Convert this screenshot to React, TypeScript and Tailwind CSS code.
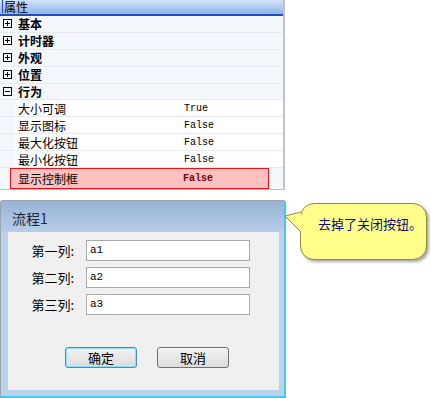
const cjk = { fontFamily: '"Noto Sans CJK SC", "Liberation Sans", sans-serif' }
const mono = { fontFamily: '"Liberation Mono", "Courier New", monospace' }

function PlusBox({ open }: { open?: boolean }) {
  return (
    <svg width="9" height="9" viewBox="0 0 9 9" className="shrink-0">
      <rect x="0.5" y="0.5" width="8" height="8" fill="#fff" stroke="#000" />
      <line x1="2" y1="4.5" x2="7" y2="4.5" stroke="#000" />
      {!open && <line x1="4.5" y1="2" x2="4.5" y2="7" stroke="#000" />}
    </svg>
  )
}

function Category({ name, open }: { name: string; open?: boolean }) {
  return (
    <div className="h-[17px] flex items-center pl-[3px] gap-[6px] border-b border-[#e7ebf1]">
      <PlusBox open={open} />
      <span className="text-[12px] font-bold leading-[15px] text-black" style={cjk}>
        {name}
      </span>
    </div>
  )
}

function Prop({ name, value }: { name: string; value: string }) {
  return (
    <div className="h-[17px] flex items-center border-b border-[#e7ebf1]">
      <div className="w-[15px] h-full shrink-0" />
      <div className="w-[168px] h-full flex items-center pl-[3px] bg-white text-[12px] leading-[15px] text-black" style={cjk}>
        {name}
      </div>
      <div className="flex-1 h-full flex items-center pl-[1px] bg-white text-[10px] leading-[15px] text-black" style={mono}>
        {value}
      </div>
    </div>
  )
}

function Field({ label, value }: { label: string; value: string }) {
  return (
    <div className="flex items-center h-[21px]">
      <div className="w-[67px] text-right pr-[1px] text-[13px] leading-[18px] text-black" style={cjk}>
        {label}
      </div>
      <div className="ml-[11px] w-[164px] h-[21px] border border-[#a9a9a9] bg-white flex items-center pl-[3px] text-[11px] text-black" style={mono}>
        {value}
      </div>
    </div>
  )
}

export default function App() {
  return (
    <div className="relative w-[431px] h-[398px] bg-white overflow-hidden">
      {/* 属性网格 */}
      <div className="w-[285px] h-[190px] bg-[#f4f7fc] border-r-2 border-b border-[#c2c2c2] flex flex-col">
        <div className="h-[16px] bg-gradient-to-b from-[#d3e3f8] to-[#8fb3e8] border-b-2 border-[#1f4fb8] flex items-center">
          <div className="w-[1px] h-[13px] bg-[#1f4fb8] ml-[2px]" />
          <span className="ml-[1px] text-[12px] leading-[12px] text-black" style={cjk}>属性</span>
        </div>
        <Category name="基本" />
        <Category name="计时器" />
        <Category name="外观" />
        <Category name="位置" />
        <Category name="行为" open />
        <Prop name="大小可调" value="True" />
        <Prop name="显示图标" value="False" />
        <Prop name="最大化按钮" value="False" />
        <Prop name="最小化按钮" value="False" />
        <div className="h-[21px] flex items-center">
          <div className="ml-[10px] w-[259px] h-[21px] border border-[#e8141c] bg-[#ffc0c0] flex items-center">
            <div className="w-[172px] pl-[7px] text-[12px] leading-[15px] text-black" style={cjk}>显示控制框</div>
            <div className="text-[10px] font-bold leading-[15px] text-[#7a0000]" style={mono}>False</div>
          </div>
        </div>
      </div>

      {/* 流程1 窗口 */}
      <div className="mt-[10px] w-[286px] h-[198px] flex flex-col border-t border-l border-[#9aa5b3] border-r-2 border-b-2 border-r-[#45c8f0] border-b-[#45c8f0] rounded-tl-[3px] rounded-tr-[3px]">
        <div className="h-[31px] bg-gradient-to-b from-[#98b3d5] to-[#b7cee8] flex items-center pl-[11px] pt-[2px]">
          <span className="text-[14px] leading-[16px] text-[#15283f]" style={cjk}>流程1</span>
        </div>
        <div className="flex-1 bg-[#b9d1ea] pl-[7px] pr-[5px] pb-[6px] flex">
          <div className="flex-1 bg-[#f0f0f0] pt-[8px] flex flex-col">
            <div className="flex flex-col gap-[6px]">
              <Field label="第一列:" value="a1" />
              <Field label="第二列:" value="a2" />
              <Field label="第三列:" value="a3" />
            </div>
            <div className="mt-[32px] flex pl-[57px] gap-[20px]">
              <button className="w-[72px] h-[21px] rounded-[3px] border border-[#3c8fc8] shadow-[inset_0_0_0_1px_#8ee0ff] bg-gradient-to-b from-[#f3f3f3] to-[#dcdcdc] text-[13px] leading-[16px] text-black" style={cjk}>
                确定
              </button>
              <button className="w-[72px] h-[21px] rounded-[3px] border border-[#707070] bg-gradient-to-b from-[#f3f3f3] to-[#dcdcdc] text-[13px] leading-[16px] text-black" style={cjk}>
                取消
              </button>
            </div>
          </div>
        </div>
      </div>

      {/* 提示气泡 */}
      <div className="absolute left-[300px] top-[203px] w-[127px] h-[57px] rounded-[14px] bg-[#ffff8a] border border-[#8f8f3a] shadow-[2px_2px_3px_rgba(0,0,0,0.35)] flex items-center pl-[17px] pb-[16px]">
        <span className="text-[13px] leading-[16px] text-[#0a0a78]" style={cjk}>去掉了关闭按钮。</span>
      </div>
      <svg className="absolute left-[284px] top-[208px]" width="20" height="30" viewBox="0 0 20 30">
        <polygon points="1,8 17,4 17,24" fill="#ffff8a" />
        <polyline points="17,4 1,8 17,24" fill="none" stroke="#8f8f3a" strokeWidth="1" />
      </svg>
    </div>
  )
}
